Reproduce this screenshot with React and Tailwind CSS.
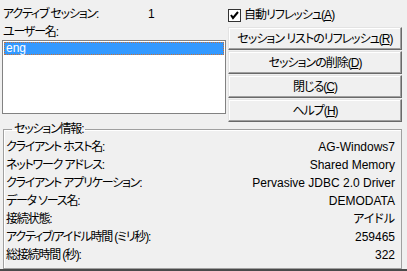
import React from 'react';

const font = "font-['Liberation_Sans','Noto_Sans_CJK_JP',sans-serif] [font-feature-settings:'palt']";

const rows = [
  ['クライアント ホスト名:', 'AG-Windows7'],
  ['ネットワーク アドレス:', 'Shared Memory'],
  ['クライアント アプリケーション:', 'Pervasive JDBC 2.0 Driver'],
  ['データ ソース名:', 'DEMODATA'],
  ['接続状態:', 'アイドル'],
  ['アクティブ/アイドル時間 (ミリ秒):', '259465'],
  ['総接続時間 (秒):', '322'],
];

const buttons = [
  ['セッション リストのリフレッシュ(', 'R', ')'],
  ['セッションの削除(', 'D', ')'],
  ['閉じる(', 'C', ')'],
  ['ヘルプ(', 'H', ')'],
];

const Button = ({ label, accel, tail }) => (
  <button className="h-[23px] w-full whitespace-nowrap tracking-[-1px] bg-[#f0f0f0] border border-t-[#e3e3e3] border-l-[#e3e3e3] border-r-[#696969] border-b-[#696969] shadow-[inset_-1px_-1px_0_#a0a0a0,inset_1px_1px_0_#ffffff] text-[12px] leading-[14px] text-black">
    {label}<span className="underline">{accel}</span>{tail}
  </button>
);

export default function App() {
  return (
    <div className={`w-[407px] h-[271px] bg-[#f0f0f0] flex flex-col text-[12px] leading-[14px] text-black ${font}`}>
      <div className="flex h-[122px]">
        <div className="w-[228px] pl-[2px] pr-[2px] flex flex-col">
          <div className="flex h-[21px] pt-[7px] pl-[1px]">
            <span className="w-[145px] tracking-[-1.2px]">アクティブ セッション:</span>
            <span>1</span>
          </div>
          <div className="h-[19px] pt-[4px] pl-[1px] tracking-[-1.2px]">ユーザー名:</div>
          <div className="h-[74px] bg-white border border-[#828282] p-[1px]">
            <div className="h-[13px] bg-[#3399ff] border border-dotted border-[#c87137] text-white leading-[11px] pl-[1px]">eng</div>
          </div>
        </div>
        <div className="w-[174px] flex flex-col">
          <div className="flex items-center gap-[3px] h-[28px] pt-[4px] pb-[1px]">
            <svg width="13" height="13" viewBox="0 0 13 13">
              <rect x="0.5" y="0.5" width="12" height="12" fill="#ffffff" stroke="#333333" />
              <path d="M3 6 L5 9 L10 3" fill="none" stroke="#000000" strokeWidth="2" />
            </svg>
            <span className="tracking-[-1px]">自動リフレッシュ(<span className="underline">A</span>)</span>
          </div>
          <div className="flex flex-col gap-[1px]">
            {buttons.map(([l, a, t]) => (
              <Button key={l} label={l} accel={a} tail={t} />
            ))}
          </div>
        </div>
      </div>
      <fieldset className="ml-[3px] mr-[5px] h-[147px] border border-[#a0a0a0] shadow-[inset_1px_1px_0_#ffffff] px-[2px] pt-[2px] pb-0">
        <legend className="ml-[6px] px-[2px] leading-[14px] tracking-[-1.2px]">セッション情報:</legend>
        {rows.map(([k, v]) => (
          <div key={k} className="flex justify-between h-[18px] leading-[18px] pr-[4px]">
            <span className="tracking-[-1.2px]">{k}</span>
            <span>{v}</span>
          </div>
        ))}
      </fieldset>
      <div className="h-[2px] bg-[#4a4a4a]" />
    </div>
  );
}
